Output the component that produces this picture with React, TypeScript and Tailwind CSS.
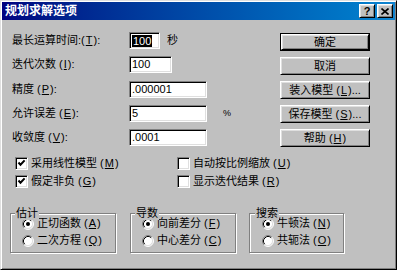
import React from "react";

const U = ({ c }: { c: string }) => (
  <>
    (<span className="underline mx-[1px]">{c}</span>)
  </>
);

const Field = ({ w, children }: { w: string; children?: React.ReactNode }) => (
  <div
    className={`${w} h-[17px] bg-white border border-t-[#808080] border-l-[#808080] border-r-white border-b-white shadow-[inset_1px_1px_0_#000,inset_-1px_-1px_0_#dfdfdf] flex items-center pl-[2px] text-[11px] leading-none text-black`}
  >
    {children}
  </div>
);

const Btn = ({ children, def }: { children: React.ReactNode; def?: boolean }) => (
  <div className={`w-[90px] h-[18px] ${def ? "border border-black" : ""}`}>
    <div className="w-full h-full bg-[#c0c0c0] border border-t-white border-l-white border-r-black border-b-black shadow-[inset_1px_1px_0_#dfdfdf,inset_-1px_-1px_0_#808080] flex items-center justify-center text-[11px] leading-none text-black whitespace-nowrap">
      {children}
    </div>
  </div>
);

const Check = ({ on }: { on?: boolean }) => (
  <div className="w-[13px] h-[13px] bg-white border border-t-[#808080] border-l-[#808080] border-r-white border-b-white shadow-[inset_1px_1px_0_#000,inset_-1px_-1px_0_#dfdfdf] flex items-center justify-center shrink-0">
    {on && (
      <svg width="9" height="9" viewBox="0 0 9 9">
        <path d="M1.5 3.5 L3.5 5.8 L7.6 1.4" fill="none" stroke="#000" strokeWidth="2" />
      </svg>
    )}
  </div>
);

const Radio = ({ on }: { on?: boolean }) => (
  <svg width="12" height="12" viewBox="0 0 12 12" className="shrink-0">
    <circle cx="6" cy="6" r="5" fill="#fff" />
    <path d="M2.11 9.89 A5.5 5.5 0 0 1 9.89 2.11" fill="none" stroke="#808080" strokeWidth="1" />
    <path d="M2.82 9.18 A4.5 4.5 0 0 1 9.18 2.82" fill="none" stroke="#000" strokeWidth="1" />
    <path d="M9.89 2.11 A5.5 5.5 0 0 1 2.11 9.89" fill="none" stroke="#fff" strokeWidth="1" />
    <path d="M9.18 2.82 A4.5 4.5 0 0 1 2.82 9.18" fill="none" stroke="#dfdfdf" strokeWidth="1" />
    {on && <circle cx="6" cy="6" r="2" fill="#000" />}
  </svg>
);

const Group = ({
  w,
  title,
  pl,
  lx,
  items,
}: {
  w: string;
  title: string;
  pl: string;
  lx: string;
  items: { t: string; k: string; on?: boolean }[];
}) => (
  <div
    className={`relative ${w} h-[40px] border border-[#808080] shadow-[inset_1px_1px_0_#fff,1px_1px_0_#fff] ${pl} pt-[1px] flex flex-col`}
  >
    <div className={`absolute -top-[8px] ${lx} px-[1px] bg-[#c0c0c0] text-[11px] leading-[14px] text-black`}>
      {title}
    </div>
    {items.map((it) => (
      <div key={it.t} className="h-[17px] flex items-center gap-[3px] text-[11px] leading-none text-black whitespace-nowrap">
        <Radio on={it.on} />
        <span>
          {it.t}
          <U c={it.k} />
        </span>
      </div>
    ))}
  </div>
);

export default function App() {
  return (
    <div className="w-[397px] h-[270px] bg-[#c0c0c0] border border-t-[#dfdfdf] border-l-[#dfdfdf] border-r-black border-b-black shadow-[inset_1px_1px_0_#fff,inset_-1px_-1px_0_#808080] p-[1px] flex flex-col font-['Liberation_Sans','Noto_Sans_CJK_SC',sans-serif] select-none overflow-hidden">
      {/* title bar */}
      <div className="h-[18px] bg-linear-to-r from-[#000080] to-[#1084d0] flex items-center pl-[3px] pr-[2px]">
        <span className="text-white text-[12px] leading-none font-bold">规划求解选项</span>
        <div className="ml-auto flex gap-[2px]">
          <div className="w-[16px] h-[14px] bg-[#c0c0c0] border border-t-white border-l-white border-r-black border-b-black shadow-[inset_1px_1px_0_#dfdfdf,inset_-1px_-1px_0_#808080] flex items-center justify-center text-[11px] font-bold leading-none text-black">
            ?
          </div>
          <div className="w-[16px] h-[14px] bg-[#c0c0c0] border border-t-white border-l-white border-r-black border-b-black shadow-[inset_1px_1px_0_#dfdfdf,inset_-1px_-1px_0_#808080] flex items-center justify-center">
            <svg width="8" height="7" viewBox="0 0 8 7">
              <path d="M0.5 0.5 L7.5 6.5 M7.5 0.5 L0.5 6.5" stroke="#000" strokeWidth="1.6" />
            </svg>
          </div>
        </div>
      </div>

      {/* fields + buttons */}
      <div className="flex mt-[12px]">
        <div className="w-[278px] pl-[10px] flex flex-col gap-[7.25px]">
          <div className="h-[17px] flex items-center">
            <div className="w-[117px] text-[11px] leading-none text-black whitespace-nowrap">
              最长运算时间:<U c="T" />:
            </div>
            <Field w="w-[31px]">
              <span className="bg-black text-white px-[1px] leading-[12px]">100</span>
            </Field>
            <span className="ml-[7px] text-[11px] leading-none text-black">秒</span>
          </div>
          <div className="h-[17px] flex items-center">
            <div className="w-[117px] text-[11px] leading-none text-black whitespace-nowrap">
              迭代次数 <U c="I" />:
            </div>
            <Field w="w-[43px]">100</Field>
          </div>
          <div className="h-[17px] flex items-center">
            <div className="w-[117px] text-[11px] leading-none text-black whitespace-nowrap">
              精度 <U c="P" />:
            </div>
            <Field w="w-[78px]">.000001</Field>
          </div>
          <div className="h-[17px] flex items-center">
            <div className="w-[117px] text-[11px] leading-none text-black whitespace-nowrap">
              允许误差 <U c="E" />:
            </div>
            <Field w="w-[78px]">5</Field>
            <span className="ml-[16px] text-[9px] leading-none text-black">%</span>
          </div>
          <div className="h-[17px] flex items-center">
            <div className="w-[117px] text-[11px] leading-none text-black whitespace-nowrap">
              收敛度 <U c="V" />:
            </div>
            <Field w="w-[78px]">.0001</Field>
          </div>
        </div>
        <div className="mt-[1px] flex flex-col gap-[6px]">
          <Btn def>确定</Btn>
          <Btn>取消</Btn>
          <Btn>
            装入模型 <U c="L" />...
          </Btn>
          <Btn>
            保存模型 <U c="S" />...
          </Btn>
          <Btn>
            帮助 <U c="H" />
          </Btn>
        </div>
      </div>

      {/* checkboxes */}
      <div className="flex mt-[7.5px] text-[11px] leading-none text-black">
        <div className="w-[175px] pl-[13px] flex flex-col">
          <div className="h-[18px] flex items-center gap-[3px] whitespace-nowrap">
            <Check on />
            <span>
              采用线性模型 <U c="M" />
            </span>
          </div>
          <div className="h-[18px] flex items-center gap-[3px] whitespace-nowrap">
            <Check on />
            <span>
              假定非负 <U c="G" />
            </span>
          </div>
        </div>
        <div className="flex flex-col">
          <div className="h-[18px] flex items-center gap-[3px] whitespace-nowrap">
            <Check />
            <span>
              自动按比例缩放 <U c="U" />
            </span>
          </div>
          <div className="h-[18px] flex items-center gap-[3px] whitespace-nowrap">
            <Check />
            <span>
              显示迭代结果 <U c="R" />
            </span>
          </div>
        </div>
      </div>

      {/* group boxes */}
      <div className="flex mt-[22.5px] pl-[8px]">
        <Group
          w="w-[106px]"
          title="估计"
          pl="pl-[11px]"
          lx="left-[4px]"
          items={[
            { t: "正切函数 ", k: "A", on: true },
            { t: "二次方程 ", k: "Q" },
          ]}
        />
        <div className="w-[14px]" />
        <Group
          w="w-[106px]"
          title="导数"
          pl="pl-[11px]"
          lx="left-[4px]"
          items={[
            { t: "向前差分 ", k: "F", on: true },
            { t: "中心差分 ", k: "C" },
          ]}
        />
        <div className="w-[13px]" />
        <Group
          w="w-[95px]"
          title="搜索"
          pl="pl-[12px]"
          lx="left-[5px]"
          items={[
            { t: "牛顿法 ", k: "N", on: true },
            { t: "共轭法 ", k: "O" },
          ]}
        />
      </div>
    </div>
  );
}
